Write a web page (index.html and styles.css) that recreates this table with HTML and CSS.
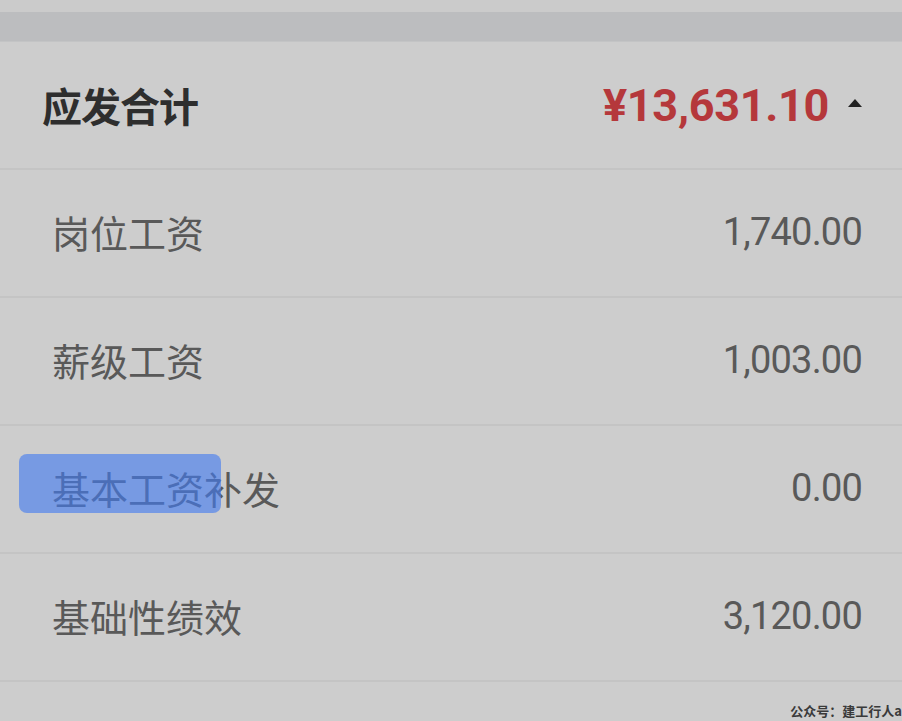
FILE: index.html
```html
<!DOCTYPE html>
<html lang="zh-CN">
<head>
<meta charset="utf-8">
<title>应发合计</title>
<link rel="stylesheet" href="styles.css">
</head>
<body>
<div class="screen">
  <div class="top-strip"></div>
  <div class="band"></div>
  <div class="card">
    <div class="row head">
      <span class="label-head">应发合计</span>
      <span class="total">
        <span class="amount">¥13,631.10</span>
        <svg class="caret" width="14" height="8" viewBox="0 0 14 8"><path d="M7 0 L14 8 L0 8 Z" fill="#222"/></svg>
      </span>
    </div>
    <div class="row item"><span class="label">岗位工资</span><span class="num">1,740.00</span></div>
    <div class="row item"><span class="label">薪级工资</span><span class="num">1,003.00</span></div>
    <div class="row item"><span class="label sel-wrap"><span class="selection"></span>基本工资补发</span><span class="num">0.00</span></div>
    <div class="row item"><span class="label">基础性绩效</span><span class="num">3,120.00</span></div>
  </div>
  <div class="watermark">公众号：建工行人a</div>
</div>
</body>
</html>
```
FILE: styles.css
```css
html, body {
  margin: 0;
  padding: 0;
  background: #cdcdcd;
}
.screen {
  position: relative;
  width: 902px;
  height: 721px;
  overflow: hidden;
  background: #cdcdcd;
  font-family: "Noto Sans CJK SC", "Noto Sans", sans-serif;
}
.top-strip {
  height: 12px;
  background: #cbcbcb;
}
.band {
  height: 29px;
  background: #bcbdbf;
  border-bottom: 1px solid #c3c4c5;
}
.card {
  display: flex;
  flex-direction: column;
}
.row {
  display: flex;
  align-items: center;
  justify-content: space-between;
  height: 126px;
  border-bottom: 2px solid #c4c4c4;
  box-sizing: content-box;
}
.head {
  padding: 0 40px 0 42px;
}
.label-head {
  font-size: 40px;
  font-weight: 700;
  color: #2e2e2e;
  letter-spacing: -1px;
}
.total {
  display: flex;
  align-items: center;
  gap: 19px;
}
.amount {
  font-family: Roboto, "Liberation Sans", sans-serif;
  font-weight: 700;
  font-size: 45px;
  color: #b5383b;
  letter-spacing: -0.3px;
}
.caret {
  display: block;
  margin-top: -4px;
}
.item {
  padding: 0 40px 0 52px;
}
.label {
  font-size: 38px;
  color: #595959;
  margin-top: -4px;
}
.sel-wrap {
  position: relative;
}
.selection {
  position: absolute;
  left: -33px;
  top: -6px;
  width: 202px;
  height: 59px;
  border-radius: 8px;
  background: rgba(66, 122, 240, 0.62);
}
.num {
  font-family: Roboto, "Liberation Sans", sans-serif;
  font-size: 38px;
  color: #595959;
  letter-spacing: -0.8px;
  margin-top: -2px;
}
.watermark {
  position: absolute;
  right: 0;
  bottom: 1px;
  font-size: 13px;
  font-weight: 700;
  color: #3a3a3a;
}
```
